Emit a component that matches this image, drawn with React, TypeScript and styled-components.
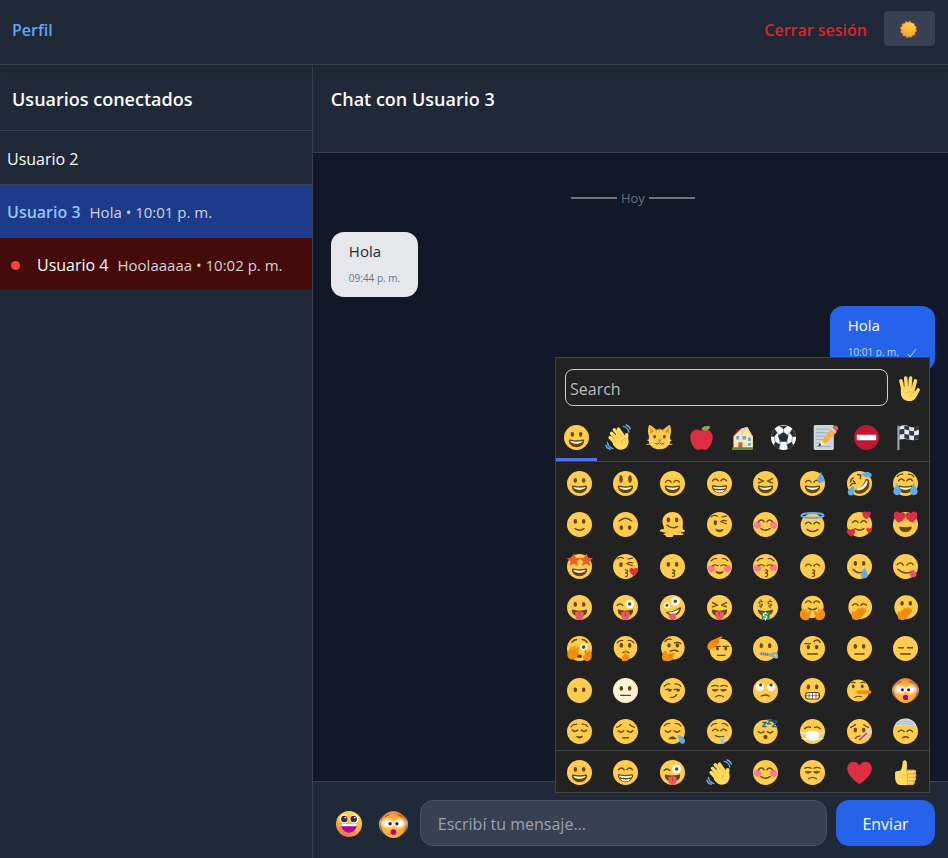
import React, { useId, useState } from "react";
import styled, { createGlobalStyle } from "styled-components";

const GlobalStyle = createGlobalStyle`
  *, *::before, *::after { box-sizing: border-box; }
  body {
    margin: 0;
    background: #111827;
    color: #f9fafb;
    font-family: "Segoe UI", "Open Sans", "Noto Sans", sans-serif;
    font-size: 16px;
    line-height: 24px;
  }
  button, input { font: inherit; }
  h1, h2, p, ul { margin: 0; padding: 0; }
`;

/* ---------- emoji drawings, all on a 36 x 36 grid ---------- */

const BROWN = "#664500";
const YELLOW = "#FFCC4D";
const RED = "#DD2E44";
const BLUE = "#5DADEC";
const ORANGE = "#F4900C";
const SKIN = "#FFDC5D";
const SKIN_LINE = "#EF9645";

const Head = ({ fill = YELLOW }: { fill?: string }) => <circle cx="18" cy="18" r="18" fill={fill} />;

const Stroke = ({ d, w = 2, c = BROWN }: { d: string; w?: number; c?: string }) => (
  <path d={d} fill="none" stroke={c} strokeWidth={w} strokeLinecap="round" strokeLinejoin="round" />
);

const Eyes = ({ y = 13.5, rx = 2.5, ry = 3.5, l = 12, r = 24 }) => (
  <g fill={BROWN}>
    <ellipse cx={l} cy={y} rx={rx} ry={ry} />
    <ellipse cx={r} cy={y} rx={rx} ry={ry} />
  </g>
);

const HappyEyes = ({ y = 14 }) => <Stroke d={`M8 ${y + 2}q4 -5 8 0M20 ${y + 2}q4 -5 8 0`} />;
const ClosedEyes = ({ y = 15 }) => <Stroke d={`M7.5 ${y}q4 4 8 0M20.5 ${y}q4 4 8 0`} />;
const SquintEyes = () => <Stroke d="M8 11l7 3.5-7 2.5M28 11l-7 3.5 7 2.5" />;
const Brows = ({ y = 8 }) => <Stroke w={1.8} d={`M6 ${y + 2}q3-4 8-3.5M30 ${y + 2}q-3-4-8-3.5`} />;

const BigMouth = () => (
  <>
    <path
      fill={BROWN}
      d="M18 22c-3.623 0-6.027-.422-9-1-.679-.131-2 0-2 2 0 4 4.595 9 11 9 6.404 0 11-5 11-9 0-2-1.321-2.132-2-2-2.973.578-5.377 1-9 1z"
    />
    <path fill="#fff" d="M9 23s3 1 9 1 9-1 9-1-2 4-9 4-9-4-9-4z" />
  </>
);
const Smile = () => <Stroke d="M11.5 24q6.5 4.5 13 0" />;
const OpenSmile = () => <path fill={BROWN} d="M12 24q6 3 12 0-1 5-6 5t-6-5z" />;
const KissMouth = ({ x = 18 }) => (
  <Stroke w={1.8} d={`M${x} 23q4 .5 3 2.5q-.5 1.5-3 1.8q4 .5 3 3q-.5 2-3 2.2`} />
);
const Cheeks = ({ y = 19 }) => (
  <g fill="#FF7892">
    <circle cx="6.5" cy={y} r="5" />
    <circle cx="29.5" cy={y} r="5" />
  </g>
);
const Drop = ({ x, y, s = 1 }: { x: number; y: number; s?: number }) => (
  <path fill={BLUE} transform={`translate(${x} ${y}) scale(${s})`} d="M0-8C1-4 5-1 5 3a5 5 0 0 1-10 0C-5-1-1-4 0-8z" />
);
const Heart = ({ x, y, s, a = 0 }: { x: number; y: number; s: number; a?: number }) => (
  <path
    fill={RED}
    transform={`translate(${x} ${y}) rotate(${a}) scale(${s})`}
    d="M0 16C-8 11-18 2-18-7c0-11 14-13 18-4 4-9 18-7 18 4C18 2 8 11 0 16z"
  />
);
const TongueMouth = () => (
  <>
    <path fill={BROWN} d="M8 21c6 2 14 2 20 0 1 0 1 1 1 2 0 4-4 8-11 8S7 27 7 23c0-1 0-2 1-2z" />
    <path fill="#E8596E" d="M12 25q6-3 12 0v5a6 6 0 0 1-12 0z" />
    <Stroke c={RED} w={1.2} d="M18 25v5" />
  </>
);
const WideEye = ({ x, y, r, p = 2 }: { x: number; y: number; r: number; p?: number }) => (
  <>
    <circle cx={x} cy={y} r={r} fill="#F5F8FA" />
    <circle cx={x} cy={y} r={p} fill={BROWN} />
  </>
);
const CoverHand = () => (
  <>
    <path
      fill={ORANGE}
      d="M8 35c-2-5-2-9 0-12l2 2 6-6c2-1 3 0 2 2l3-3c2-1 3 1 2 2l2-1c2 0 2 2 1 3 2 0 2 2 1 3l-7 8c-3 3-7 4-12 2z"
    />
    <Stroke c="#D67503" w={0.8} d="M13 27l6-6M15 29l7-7M17 31l7-7" />
  </>
);
const HugHand = ({ flip = false }: { flip?: boolean }) => (
  <g transform={flip ? "translate(36 0) scale(-1 1)" : undefined}>
    <path
      fill={ORANGE}
      d="M1 23c1-2 2-1 3 1l1 2-2-5c0-2 2-2 3 0l2 4-1-4c0-2 2-2 3 0l1 5 2-3c2-2 4-1 3 1l-2 8c-1 4-4 5-8 4-5-1-8-7-5-13z"
    />
    <Stroke c="#D67503" w={0.8} d="M3 27l3 3M6 26l2 3" />
  </g>
);
const WaveHand = () => (
  <>
    <g fill="none" stroke={SKIN} strokeLinecap="round">
      <path strokeWidth="5" d="M8 12l11 12M12 7l12 13M18 6l9 13M6 18l9 10" />
      <path strokeWidth="5" d="M30 14q-1 6-1 10" />
    </g>
    <path fill={SKIN} d="M9 17l13-8 5 9 5 1c2 7-1 14-7 16-5 2-11-1-15-7z" />
    <Stroke c={SKIN_LINE} w={0.9} d="M10.5 11l8 9M15 8l8 9M7.5 16l7 8M22 27q0-7 6-9" />
    <Stroke c={BLUE} w={2} d="M25 2q6 1 8 8M29 0q5 2 6 6M2 25q1 7 8 9M0 29q1 5 6 6" />
  </>
);
const Star = ({ x, y }: { x: number; y: number }) => (
  <path
    fill="#E95F28"
    transform={`translate(${x} ${y})`}
    d="M1-10l2.500 6.500 7 .5-5.500 4.500 2 7L.5 4.500l-6 4 1.700-7L-9.500-3l7-.5z"
  />
);
const Dollar = ({ x, y, c = BROWN }: { x: number; y: number; c?: string }) => (
  <g transform={`translate(${x} ${y})`}>
    <Stroke c={c} w={1.5} d="M2.5-2.500q-2.500-1.500-4.500-.5t0 3q4 0 4 2t-4.500 1.200M0-5.500v1.500M0 4.500v1.500" />
  </g>
);

const GloomBrows = () => <Stroke w={1.8} d="M5 12q4-1 7-4M31 12q-4-1-7-4" />;
const Frown = () => <Stroke d="M12.500 27q5.500-4 11 0" />;

const AstonishedFace = () => {
  const id = useId();
  return (
    <>
      <defs>
        <radialGradient id={`${id}face`} cx="45%" cy="60%" r="60%">
          <stop offset="0" stopColor="#FFC04A" />
          <stop offset="0.7" stopColor="#FFA930" />
          <stop offset="1" stopColor="#E37F45" />
        </radialGradient>
        <linearGradient id={`${id}haze`} x1="0" y1="0" x2="0" y2="1">
          <stop offset="0" stopColor="#5E3530" />
          <stop offset="0.4" stopColor="#FFE3B8" />
          <stop offset="1" stopColor="#7C3A48" />
        </linearGradient>
        <radialGradient id={`${id}glow`}>
          <stop offset="0.3" stopColor="#fff" />
          <stop offset="1" stopColor="#fff" stopOpacity="0" />
        </radialGradient>
      </defs>
      <ellipse cx="18" cy="18" rx="19.500" ry="17" fill={`url(#${id}haze)`} opacity="0.7" />
      <ellipse cx="18" cy="18" rx="16.500" ry="18" fill={`url(#${id}face)`} />
      <ellipse cx="10" cy="16.500" rx="10" ry="8" fill={`url(#${id}glow)`} />
      <ellipse cx="26" cy="16.500" rx="10" ry="8" fill={`url(#${id}glow)`} />
      <circle cx="13.500" cy="17" r="4" fill="#fff" />
      <circle cx="22.500" cy="17" r="4" fill="#fff" />
      <circle cx="13.500" cy="17" r="2.300" fill="#3B2340" />
      <circle cx="22.500" cy="17" r="2.300" fill="#3B2340" />
      <Stroke c="#8A4B20" w={1.2} d="M7 7.500q2-2 5-2.500M29 7.500q-2-2-5-2.500" />
      <circle cx="18" cy="28" r="3.800" fill="#B3008F" />
    </>
  );
};

const GlossyGrin = () => {
  const id = useId();
  return (
    <>
      <defs>
        <linearGradient id={id} x1="0.7" y1="0" x2="0.2" y2="1">
          <stop offset="0" stopColor="#FFE04A" />
          <stop offset="0.55" stopColor="#FFB235" />
          <stop offset="1" stopColor="#E3606B" />
        </linearGradient>
      </defs>
      <Head fill={`url(#${id})`} />
      <circle cx="11" cy="11" r="6" fill="#fff" />
      <circle cx="25" cy="11" r="6" fill="#fff" />
      <circle cx="11.500" cy="11" r="4.500" fill="#43273F" />
      <circle cx="24.500" cy="11" r="4.500" fill="#43273F" />
      <circle cx="13" cy="9" r="1.200" fill="#fff" />
      <circle cx="26" cy="9" r="1.200" fill="#fff" />
      <path fill="#B4009E" d="M7 18h22c0 7-5 12-11 12S7 25 7 18z" />
      <path fill="#fff" d="M7 18h22v1c0 1-1 2-2 2H9c-1 0-2-1-2-2z" />
    </>
  );
};

const SunDisc = () => {
  const id = useId();
  return (
    <>
      <defs>
        <linearGradient id={id} x1="0.7" y1="0" x2="0.2" y2="1">
          <stop offset="0" stopColor="#FFD83A" />
          <stop offset="1" stopColor="#E8A03C" />
        </linearGradient>
      </defs>
      <circle cx="18" cy="18" r="16" fill="none" stroke="#EF7F32" strokeWidth="3.500" strokeDasharray="5.380 3" />
      <circle cx="18" cy="18" r="15.500" fill={`url(#${id})`} />
    </>
  );
};

const drawings: Record<string, React.ReactNode> = {
  grinning: <><Head /><Eyes /><BigMouth /></>,
  smiley: <><Head /><Eyes y={11.5} ry={5.5} l={11.5} r={24.5} /><BigMouth /></>,
  smile: <><Head /><HappyEyes /><BigMouth /></>,
  grin: (
    <>
      <Head /><HappyEyes y={12} />
      <path fill={BROWN} d="M7 22q0-2 2-1.500 9 2 18 0 2-.5 2 1.500c0 5-5 10-11 10S7 27 7 22z" />
      <path fill="#fff" d="M9 22.500q9 2 18 0v2.500q-9 2-18 0zM10 27q8 2 16 0-3 4-8 4t-8-4z" />
    </>
  ),
  laughing: <><Head /><SquintEyes /><BigMouth /></>,
  sweatSmile: <><Head /><HappyEyes /><BigMouth /><Drop x={30} y={9} /></>,
  rofl: (
    <>
      <Head />
      <Stroke w={2} d="M5 21q1-4 7-3l-3-4M15 5l5 1-1 5M5 16q1-5 4-6" />
      <path fill={BROWN} d="M12 31c-2-2-1-4 2-5 6-2 10-6 12-12 1-3 3-4 5-1 3 6 1 12-4 16s-11 5-15 2z" />
      <path fill="#fff" d="M14 28c-1-1 0-2 2-3 5-2 9-5 11-10 1-2 2-1 2.500 0 0 7-6 13-15.500 13z" />
      <path fill={BLUE} d="M21 5c4-4 10-5 14-1 2 3-1 6-4 5-3 0-6-1-10-4zM9 21c2 4 3 9 0 13-3 3-8 1-8-3 0-4 4-6 8-10z" />
    </>
  ),
  joy: (
    <>
      <Head /><Brows y={6} /><HappyEyes y={12} /><BigMouth />
      <Drop x={6} y={26} s={1.1} /><Drop x={30} y={26} s={1.1} />
    </>
  ),
  slightSmile: <><Head /><Eyes /><Smile /></>,
  upsideDown: <g transform="rotate(180 18 18)"><Head /><Eyes /><Stroke d="M9 23q9 8 18 0" /></g>,
  melting: (
    <>
      <path
        fill={YELLOW}
        d="M18 0c9 0 15 7 15 15 0 4-1 6 0 9 1 3 3 1 3 3s-3 2-5 2 0 2 2 2 1 2-1 2H20c-2 0 0 3-3 3h-6c-3 0-2-3-5-3-2 0-1-2 1-2s1-2-2-2-5 0-5-2 2-2 4-2 2-3 1-5C0 9 8 0 18 0z"
      />
      <Eyes y={11.5} /><Stroke d="M10 19q8 6 15 2" />
      <Stroke w={1} c="#D79B22" d="M7 29h5M25 29h4" />
    </>
  ),
  wink: (
    <>
      <Head /><ellipse cx="12" cy="15.500" rx="2.500" ry="3.500" fill={BROWN} />
      <Stroke d="M20 14l8 3M20 14q4-3 8-1M6 7q4-4 9-1M22 7l6-1" w={1.7} />
      <OpenSmile />
    </>
  ),
  blush: <><Head /><Cheeks /><HappyEyes y={12} /><Smile /></>,
  halo: (
    <>
      <circle cx="18" cy="19" r="17" fill={YELLOW} /><HappyEyes y={15} /><Stroke d="M10 25q8 6 16 0" />
      <ellipse cx="18" cy="5" rx="16" ry="3.500" fill="none" stroke={BLUE} strokeWidth="3" />
    </>
  ),
  hearts: <><Head /><HappyEyes y={13} /><Smile /><Heart x={28} y={5} s={0.34} /><Heart x={6} y={30} s={0.34} a={-5} /><Heart x={32} y={27} s={0.23} /></>,
  heartEyes: (
    <>
      <Head /><Heart x={9} y={8} s={0.48} a={10} /><Heart x={27} y={8} s={0.48} a={-10} />
      <path fill={BROWN} d="M10 21q8 2 16 0c2 0 1 8-8 8s-10-8-8-8z" />
    </>
  ),
  starStruck: <><Head /><Star x={9} y={9} /><Star x={27} y={9} /><BigMouth /></>,
  kissHeart: (
    <>
      <Head /><ellipse cx="11.500" cy="15.500" rx="2.500" ry="3.500" fill={BROWN} />
      <Stroke d="M20 14l8 3M20 14q4-3 8-1M6 7q4-4 9-1M22 7l6-1" w={1.7} />
      <KissMouth /><Heart x={30} y={26} s={0.36} />
    </>
  ),
  kiss: <><Head /><Eyes y={15} /><KissMouth /></>,
  relaxed: <><Head /><Cheeks y={21} /><Stroke d="M8 17q4-3 8 0M20 17q4-3 8 0" w={1.7} /><Brows y={8} /><OpenSmile /></>,
  kissClosed: <><Head /><Cheeks y={20} /><Stroke d="M8 17q4-3 8 0M20 17q4-3 8 0" w={1.7} /><Brows y={8} /><KissMouth /></>,
  kissSmile: <><Head /><HappyEyes y={15} /><KissMouth /></>,
  tear: <><Head /><Eyes /><Stroke d="M9 22q5 7 13 4" /><Drop x={25} y={27} /></>,
  yum: (
    <>
      <Head /><Stroke d="M6 15q5-5 9 1M20 16q4-6 9-1M7 22q10 9 20 3" />
      <path fill="#E8596E" transform="rotate(-35 27 27)" d="M23 25h9v5a4.500 4.500 0 0 1-9 0z" />
      <Stroke c={RED} w={1} d="M26 26l3 4" />
    </>
  ),
  tongue: <><Head /><Eyes y={13.5} /><TongueMouth /></>,
  winkTongue: <><Head /><Stroke d="M6 15q4-4 8 0" /><WideEye x={24} y={13} r={6.5} p={2.4} /><TongueMouth /></>,
  zany: (
    <>
      <Head /><WideEye x={10} y={15} r={4.5} /><WideEye x={22} y={9} r={6.5} p={2.4} />
      <path fill={BROWN} d="M9 24q10 1 19-6c2-1 3 1 2 3-2 6-6 9-11 9-6 0-12-5-10-6z" />
      <path fill="#fff" d="M12 25q9 0 16-5-3 7-9 8-5 0-7-3z" />
      <path fill="#E8596E" transform="rotate(-12 18 30)" d="M13 27h10v4a5 5 0 0 1-10 0z" />
    </>
  ),
  squintTongue: <><Head /><SquintEyes /><TongueMouth /></>,
  money: (
    <>
      <Head /><Dollar x={11.5} y={12.5} /><Dollar x={24.5} y={12.5} />
      <path fill={BROWN} d="M7 21q11 4 22 0c0 5-4 9-11 9S7 26 7 21z" />
      <path fill="#3E8A4E" d="M12 24q6 2 12 0v12H13z" />
      <Dollar x={18} y={30} c="#fff" />
    </>
  ),
  hug: <><circle cx="18" cy="17" r="16" fill={YELLOW} /><HappyEyes y={9} /><Stroke d="M12 19q6 4 12 0" /><HugHand /><HugHand flip /></>,
  giggle: <><circle cx="19" cy="17.500" r="17" fill={YELLOW} /><HappyEyes y={13} /><CoverHand /></>,
  gasp: <><circle cx="19" cy="17.500" r="17" fill={YELLOW} /><Eyes y={12} l={13} r={25} /><CoverHand /></>,
  peek: (
    <>
      <Head /><Stroke d="M7 9q3-4 7-4M22 5q4 0 7 4" />
      <WideEye x={24} y={16} r={5} p={2.6} />
      <ellipse cx="18" cy="29" rx="4" ry="2.500" fill={BROWN} />
      <path fill={ORANGE} d="M1 24l5-10 2 6 3-8 2 7 3-5 1 3-1 10c-2 5-5 7-9 7-5-1-8-6-6-10zM35 24l-3-5-2 5-3-5-2 2 1 6-3 2c0 4 3 7 6 7 5 0 8-6 6-12z" />
      <Stroke c="#D67503" w={0.9} d="M6 22l3 5M10 20l2 6M30 24l-1 4" />
    </>
  ),
  shush: (
    <>
      <circle cx="18" cy="17" r="17" fill={YELLOW} /><Brows /><Eyes y={13.5} />
      <Stroke w={1.8} d="M14 24q4-3 9 0" />
      <path fill={ORANGE} d="M17 19c2-1 2 0 2 2v6c3-1 4 1 4 4s-2 5-5 5h-5v-6c1-2 3-2 3-4z" />
      <Stroke c="#D67503" w={1} d="M18 29h4M18 32h4" />
    </>
  ),
  think: (
    <>
      <circle cx="18.500" cy="17" r="17" fill={YELLOW} /><Eyes y={13.5} ry={3} l={13} r={25} />
      <Stroke d="M7 8q4-5 9-3M21 10q5-2 9 1M15 22q5-3 11 0" />
      <path fill={ORANGE} d="M6 22c3-1 4 1 4 4l9-2c3 0 3 2 1 3l-3 1c4 0 3 7-3 8H8c-6 0-7-7-2-14z" />
      <Stroke c="#D67503" w={1} d="M13 28h5M13 31h4" />
    </>
  ),
  salute: (
    <>
      <circle cx="20" cy="20" r="16" fill={YELLOW} /><Eyes y={18} rx={2} ry={2.8} l={15} r={27} />
      <Stroke d="M12 15h7M23 15h8M15 28h11" w={1.7} />
      <path fill={ORANGE} d="M1 18c-1-4 0-8 5-11L19 1c3-1 4 0 2 2l-5 4c3 0 3 1 1 3L9 18l-6 3z" />
      <Stroke c="#D67503" w={1} d="M8 10l9-4M9 13l8-5" />
    </>
  ),
  zipper: (
    <>
      <Head /><Eyes y={14} /><Stroke w={4} c="#99AAB5" d="M11 25.500l16 2" />
      <Stroke w={1.2} c="#66757F" d="M12 24v3M15 24v3M18 25v3M21 25v3" />
      <path fill="#99AAB5" d="M24 25l8-2c3 0 5 4 4 8-1 2-3 2-5 1l-6-3z" /><circle cx="32" cy="28" r="1.500" fill={YELLOW} />
    </>
  ),
  eyebrow: <><Head /><Eyes y={16} ry={3.2} /><Stroke d="M7 11h8M20 8q5-5 9 1M11 26h14" /></>,
  neutral: <><Head /><Eyes y={15} /><Stroke d="M11.500 26h13" /></>,
  expressionless: <><Head /><Stroke d="M8 17h7M21 17h7M11 26h14" /></>,
  noMouth: <><Head /><Eyes y={17} /></>,
  dotted: (
    <>
      <Head fill="#FFF3D9" /><circle cx="18" cy="18" r="17" fill="none" stroke={YELLOW} strokeWidth="1.500" strokeDasharray="3 6" />
      <Eyes y={15} /><Stroke d="M11 25h14" />
    </>
  ),
  smirk: <><Head /><Brows y={10} /><Stroke d="M8 17q4-2 8 0M20 17q4-2 8 0M15 28q6 1 9-4" w={1.8} /><Stroke w={3} d="M13 18h2M25 18h2" /></>,
  unamused: (
    <>
      <Head /><Stroke w={1.8} d="M7 12q5-3 9 0M20 12q4-3 9 0M8 17h8M20 17h8" />
      <Stroke w={2.6} d="M10 18h3M22 18h3" /><Frown />
    </>
  ),
  eyeRoll: <><Head /><WideEye x={10} y={13} r={6} p={0} /><WideEye x={26} y={13} r={6} p={0} /><circle cx="11" cy="10" r="2.300" fill={BROWN} /><circle cx="26" cy="10" r="2.300" fill={BROWN} /><Stroke d="M12 26q6-3 11 0" /></>,
  grimace: (
    <>
      <Head /><Eyes y={13} /><rect x="7" y="20" width="22" height="11" rx="5" fill={BROWN} />
      <rect x="9" y="21.500" width="18" height="8" rx="3" fill="#fff" />
      <Stroke w={1} d="M9 25.500h18M13 22v7M18 22v7M23 22v7" />
    </>
  ),
  lying: (
    <>
      <circle cx="16" cy="18" r="16" fill={YELLOW} /><Eyes y={12} ry={2.8} rx={2} l={9} r={22} />
      <Stroke d="M6 7q3-2 6 0M20 7q3-2 6 0M11 28q5-3 10-1" w={1.6} />
      <rect x="14" y="17.500" width="21" height="5.500" rx="2.700" fill={ORANGE} />
    </>
  ),
  astonished: <AstonishedFace />,
  relieved: <><Head /><Brows y={9} /><ClosedEyes y={16} /><path fill={BROWN} d="M13 24q5 2 10 0-1 4-5 4t-5-4z" /></>,
  pensive: <><Head /><GloomBrows /><ClosedEyes y={17} /><Stroke d="M14 27h8" /></>,
  sleepy: <><Head /><Brows y={8} /><ClosedEyes y={17} /><path fill={BROWN} d="M12 29q6-8 12 0z" /><path fill={BLUE} d="M24 23c7 0 12 4 12 9 0 4-5 5-7 2-2-2-1-7-5-11z" /></>,
  drool: <><Head /><Brows y={8} /><HappyEyes y={15} /><Stroke d="M12 24q6 3 12 1" /><path fill="#8CCAF7" d="M19 26h6v8c0 3-5 2-5 0z" /></>,
  sleeping: <><circle cx="18" cy="18.500" r="17.500" fill={YELLOW} /><ClosedEyes y={18} /><circle cx="18" cy="26" r="3" fill={BROWN} /><Stroke c="#226699" w={2} d="M14 5h5l-5 6h5M21 1h5l-5 6h5M28 3h7l-7 8h7" /></>,
  mask: (
    <>
      <Head /><Stroke d="M7 14q3-4 8-2M29 14q-3-4-8-2" />
      <Stroke w={2} c="#E6E7E8" d="M1 19l9 3M35 19l-9 3M3 28l8 1M33 28l-8 1" />
      <path fill="#fff" d="M9 19q9-4 18 0v10q-9 5-18 0z" />
    </>
  ),
  thermometer: <><Head /><GloomBrows /><Eyes y={16} /><Stroke w={1.8} d="M12 28q3-4 8-3" /><Stroke w={5} c="#CCD6DD" d="M20 28L33 17" /><Stroke w={2} c={RED} d="M18 30L28 21" /></>,
  bandage: (
    <>
      <Head /><Stroke d="M8 18q4-4 8 0M20 18q4-4 8 0M14 27q4-3 8 0" />
      <path fill="#CCD6DD" d="M3 8C8-3 27-4 33 8l1 4Q18 7 2 11z" />
      <Stroke c="#99AAB5" w={0.8} d="M4 8q14-4 28 2M8 4q12-2 20 2" />
    </>
  ),
  wave: <WaveHand />,
  heart: <Heart x={18} y={19} s={0.98} />,
  thumbsUp: (
    <>
      <path fill={SKIN} d="M3 18c0-2 3-2 8-3 3-4 2-8 3-12 1-4 6-3 6 1v10h10c4 0 4 4 2 5 2 1 2 5 0 6 2 1 1 5-1 5 1 3 0 6-3 6H10c-4 0-7-5-7-11z" />
      <Stroke c={SKIN_LINE} w={1.3} d="M20 15h10q4 2 1 5h-9M31 20q4 3 0 5h-9M31 25q3 3-1 5h-8M30 30q2 3-2 5h-7M20 15q-2 2 1 5-2 2 0 5-2 3 0 5-1 3 0 5" />
    </>
  ),
  hand: (
    <>
      <g fill="none" stroke={SKIN} strokeLinecap="round">
        <path strokeWidth="5" d="M10 19L7 7M15 17L14 3M20 17l1-14M25 18l3-11" />
        <path strokeWidth="5" d="M26 27q4-2 6-7" />
      </g>
      <path fill={SKIN} d="M7 16l20-1 0 7 5 1c-2 9-6 13-12 13-9 0-13-5-13-12z" />
      <Stroke c={SKIN_LINE} w={0.8} d="M11 9l1 8M17.500 6v10M24.500 9l-2 8M14 24q8-3 12 0-4 0-6 6" />
    </>
  ),
  cat: (
    <>
      <path fill={YELLOW} d="M3 0q3 0 10 7 5-2 10 0Q31 0 33 0q3 8 0 17 2 5 0 9c-3 7-9 9-15 9S6 33 3 26q-2-4 0-9Q0 8 3 0z" />
      <path fill={ORANGE} d="M4 2l6 7-5 4zM32 2l-6 7 5 4zM17 5h2l-1 8zM13 6l2 5-4-4zM23 6l-2 5 4-4z" />
      <Eyes y={17} ry={2.6} rx={2} l={11} r={25} />
      <path fill="#E75A70" d="M15 21h6l-3 3z" /><Stroke w={1.2} d="M12 27q4 2 6-2 2 4 6 2" />
      <Stroke c="#F7E7A8" w={1.2} d="M1 22l9 2M0 28l10-1M35 22l-9 2M36 28l-10-1" />
    </>
  ),
  apple: (
    <>
      <path fill={RED} d="M18 9c5-4 15-3 16 7 1 8-5 20-11 20-2 0-3-1-5-1s-3 1-5 1C7 36 1 24 2 16 3 6 13 5 18 9z" />
      <Stroke c="#8A4633" w={1.5} d="M18 10q0-5 5-8" /><path fill="#77B255" d="M18 6c2-5 8-5 13-4-2 5-8 8-13 4z" />
    </>
  ),
  house: (
    <>
      <path fill="#A0041E" d="M8 6h4v9H8z" /><path fill="#66757F" d="M5 15L15 5h3L6 19z" />
      <path fill="#FFE8B6" d="M5 17L17 5l8-2 8 14v17H5z" />
      <path fill="#F3D2A2" d="M17 5l8-2 8 14-2 1-7-12-9 12z" />
      <path fill="#55ACEE" d="M9 16h4v5H9zM18 16h5v5h-5zM26 18h4v5h-4zM26 26h4v4h-4z" />
      <path fill="#C1694F" d="M12 25h6v9h-6z" /><path fill="#5C913B" d="M3 32h30v4H3z" />
    </>
  ),
  soccer: (
    <>
      <Head fill="#F5F8FA" />
      <path
        fill="#292F33"
        d="M18 10l7 5-2 9H13l-3-9zM12 1h12l-6 5zM1 12L5 5l4 6-4 6H0zM31 5l4 7 1 5h-5l-4-6zM4 29l2-5 7 4-1 7q-5-2-8-6zM32 29l-2-5-7 4 1 7q5-2 8-6z"
      />
      <Stroke c="#66757F" w={0.9} d="M18 6v5M9 11l3 4M27 11l-3 4M6 24l-1-7M13 28v-4M23 28v-4M30 24l1-7" />
    </>
  ),
  memo: (
    <>
      <rect x="1" y="0" width="29" height="36" rx="2" fill="#CCD6DD" />
      <Stroke c="#99AAB5" w={1.3} d="M5 6h18M5 11h16M5 16h12M5 21h8M5 26h7M5 31h20" />
      <path fill="#FFAC33" d="M12 23L28 4l6 6-16 17z" /><path fill="#EA596E" d="M28 4l3-3q2-1 4 1t1 4l-3 4z" />
      <path fill="#CCD6DD" d="M26 6l2-2 6 6-2 2z" /><path fill="#FFE8B6" d="M12 22l6 6-9 2z" /><path fill="#292F33" d="M10 26l2 3-5 2z" />
    </>
  ),
  noEntry: <><Head fill="#BE1931" /><rect x="4" y="14" width="28" height="8" rx="1" fill="#fff" /></>,
  flag: (
    <>
      <path fill="#99AAB5" d="M2 1h3v35H2z" />
      <path fill="#E1E8ED" d="M5 2q7-3 14 0t14-1v19q-7 3-14 1t-14 0z" />
      <path fill="#31373D" d="M5 7q4-2 7-1V1l7 1v6q4 1 7 1V3l7-2v6l-7 2v6l7-1v6l-7 2v-7q-4 1-7-1V8l-7-2v7l7 1v7l-7-2v-6q-4 0-7 1z" />
    </>
  ),
  glossyGrin: <GlossyGrin />,
  sun: <SunDisc />,
};

const Glyph = styled.svg<{ $size: number }>`
  display: block;
  flex: none;
  width: ${(p) => p.$size}px;
  height: ${(p) => p.$size}px;
  overflow: visible;
`;

const Emoji = ({ name, size = 25 }: { name: string; size?: number }) => (
  <Glyph $size={size} viewBox="0 0 36 36" aria-hidden="true">
    {drawings[name]}
  </Glyph>
);

/* ---------- page frame ---------- */

const Page = styled.div`
  display: flex;
  flex-direction: column;
  height: 100vh;
  min-height: 600px;
`;

const TopBar = styled.header`
  display: flex;
  align-items: center;
  justify-content: space-between;
  padding: 11px 13px 18px 12px;
  background: #1f2937;
  border-bottom: 1px solid #374151;
  box-shadow: 0 4px 12px rgba(0, 0, 0, 0.12);
  z-index: 1;
`;

const ProfileLink = styled.a`
  padding-top: 2px;
  color: #60a5fa;
  font-weight: 600;
  text-decoration: none;
`;

const TopActions = styled.div`
  display: flex;
  align-items: center;
  gap: 17px;
`;

const LogoutButton = styled.button`
  padding: 2px 0 0;
  border: 0;
  background: none;
  color: #dc2626;
  font-weight: 600;
  cursor: pointer;
`;

const ThemeButton = styled.button`
  display: grid;
  place-items: center;
  width: 51px;
  height: 35px;
  padding: 2px 2px 0 0;
  border: 0;
  border-radius: 4px;
  background: #374151;
  cursor: pointer;
`;

const Body = styled.div`
  display: grid;
  grid-template-columns: 33% 1fr;
  flex: 1;
  min-height: 0;
`;

const Sidebar = styled.aside`
  background: #1f2937;
  border-right: 1px solid #374151;
`;

const SidebarTitle = styled.h2`
  padding: 22px 12px 19px;
  border-bottom: 1px solid #374151;
  font-size: 18px;
  line-height: 24px;
  font-weight: 600;
`;

const UserList = styled.ul`
  padding-top: 1px;
  list-style: none;
`;

type RowTone = "plain" | "active" | "unread";
const rowColors: Record<RowTone, string> = { plain: "transparent", active: "#1e3a8a", unread: "#450a0a" };

const UserItem = styled.li<{ $tone: RowTone }>`
  background: ${(p) => rowColors[p.$tone]};

  &:not(:last-child) { border-bottom: 1px solid #374151; }
`;

const UserButton = styled.button`
  display: flex;
  align-items: center;
  gap: 9px;
  width: 100%;
  height: 52px;
  padding: 2px 7px 0;
  border: 0;
  background: none;
  color: inherit;
  text-align: left;
  cursor: pointer;
`;

const UserName = styled.span<{ $active?: boolean }>`
  color: ${(p) => (p.$active ? "#93c5fd" : "#f9fafb")};
  font-weight: ${(p) => (p.$active ? 600 : 400)};
`;

const UserPreview = styled.span`
  color: #d1d5db;
  font-size: 15px;
`;

const UnreadDot = styled.span`
  flex: none;
  width: 9px;
  height: 9px;
  margin: 0 8px 0 4px;
  border-radius: 50%;
  background: #ef4444;
`;

/* ---------- conversation ---------- */

const Chat = styled.main`
  display: flex;
  flex-direction: column;
  min-width: 0;
  min-height: 0;
  background: #111827;
`;

const ChatHeader = styled.header`
  padding: 22px 18px 41px;
  background: #1f2937;
  border-bottom: 1px solid #374151;
`;

const ChatTitle = styled.h1`
  font-size: 18px;
  line-height: 24px;
  font-weight: 600;
`;

const Messages = styled.section`
  display: flex;
  flex: 1;
  flex-direction: column;
  gap: 9px;
  min-height: 0;
  padding: 36px 13px 18px 18px;
`;

const DayDivider = styled.div`
  display: flex;
  align-items: center;
  justify-content: center;
  gap: 4px;
  margin-bottom: 16px;
  color: #6b7280;
  font-size: 13px;
  line-height: 18px;

  &::before, &::after {
    content: "";
    width: 46px;
    height: 2px;
    background: #6b7280;
  }
`;

const Bubble = styled.article<{ $own?: boolean }>`
  align-self: ${(p) => (p.$own ? "flex-end" : "flex-start")};
  padding: 7px 18px 11px;
  border-radius: 13px;
  background: ${(p) => (p.$own ? "#2563eb" : "#e5e7eb")};
  color: ${(p) => (p.$own ? "#fff" : "#1f2937")};
  font-size: 15px;
`;

const BubbleMeta = styled.div<{ $own?: boolean }>`
  display: flex;
  align-items: center;
  gap: 8px;
  margin-top: 7px;
  color: ${(p) => (p.$own ? "#bfdbfe" : "#6b7280")};
  font-size: 10px;
  line-height: 16px;
`;

const Tick = styled.svg`
  width: 10px;
  height: 10px;
  margin-top: 2px;
`;

const Composer = styled.form`
  position: relative;
  display: flex;
  align-items: center;
  gap: 9px;
  padding: 18px 13px 12px 19px;
  background: #1f2937;
  border-top: 1px solid #374151;
`;

const IconButton = styled.button`
  display: grid;
  place-items: center;
  flex: none;
  width: 35px;
  height: 35px;
  padding: 2px 0 0;
  border: 0;
  background: none;
  cursor: pointer;
`;

const MessageInput = styled.input`
  flex: 1;
  min-width: 0;
  height: 46px;
  padding: 2px 17px 0;
  border: 1px solid #4b5563;
  border-radius: 13px;
  outline: none;
  background: #374151;
  color: #f9fafb;

  &::placeholder { color: #9ca3af; opacity: 1; }
`;

const SendButton = styled.button`
  flex: none;
  width: 99px;
  height: 46px;
  padding: 2px 0 0;
  border: 0;
  border-radius: 13px;
  background: #2563eb;
  color: #fff;
  cursor: pointer;
`;

/* ---------- emoji picker ---------- */

const Picker = styled.div`
  position: absolute;
  right: 18px;
  bottom: 65px;
  width: 375px;
  border: 1px solid #444;
  background: #222;
`;

const PickerSearch = styled.div`
  display: flex;
  align-items: center;
  gap: 8px;
  padding: 11px 8px 6px 9px;
`;

const SearchInput = styled.input`
  flex: 1;
  min-width: 0;
  height: 37px;
  padding: 2px 4px 0;
  border: 1px solid #ccc;
  border-radius: 8px;
  outline: none;
  background: #222;
  color: #efefef;

  &::placeholder { color: #bbb; opacity: 1; }
`;

const PickerButton = styled.button`
  display: grid;
  place-items: center;
  min-width: 0;
  padding: 1px 0 0;
  border: 0;
  background: none;
  cursor: pointer;
`;

const Tabs = styled.nav`
  display: grid;
  grid-template-columns: repeat(9, 1fr);
  border-bottom: 1px solid #444;
`;

const TabButton = styled(PickerButton)<{ $selected: boolean }>`
  height: 49px;
  padding-top: 4px;
  border-bottom: 3px solid ${(p) => (p.$selected ? "#5373ec" : "transparent")};
`;

const EmojiViewport = styled.div`
  height: 288px;
  overflow: hidden;
`;

const EmojiGrid = styled.div`
  display: grid;
  grid-template-columns: repeat(8, 1fr);
  grid-template-rows: repeat(7, 1fr);
  height: 290px;
`;

const FavoriteRow = styled.div`
  display: grid;
  grid-template-columns: repeat(8, 1fr);
  height: 42px;
  border-top: 1px solid #444;
`;

const tabNames = ["grinning", "wave", "cat", "apple", "house", "soccer", "memo", "noEntry", "flag"];

const gridNames = [
  "grinning", "smiley", "smile", "grin", "laughing", "sweatSmile", "rofl", "joy",
  "slightSmile", "upsideDown", "melting", "wink", "blush", "halo", "hearts", "heartEyes",
  "starStruck", "kissHeart", "kiss", "relaxed", "kissClosed", "kissSmile", "tear", "yum",
  "tongue", "winkTongue", "zany", "squintTongue", "money", "hug", "giggle", "gasp",
  "peek", "shush", "think", "salute", "zipper", "eyebrow", "neutral", "expressionless",
  "noMouth", "dotted", "smirk", "unamused", "eyeRoll", "grimace", "lying", "astonished",
  "relieved", "pensive", "sleepy", "drool", "sleeping", "mask", "thermometer", "bandage",
];

const favoriteNames = ["grinning", "grin", "winkTongue", "wave", "blush", "unamused", "heart", "thumbsUp"];

const EmojiPicker = () => {
  const [tab, setTab] = useState(0);
  return (
    <Picker>
      <PickerSearch>
        <SearchInput type="text" placeholder="Search" aria-label="Search" />
        <PickerButton type="button" aria-label="hand">
          <Emoji name="hand" />
        </PickerButton>
      </PickerSearch>
      <Tabs>
        {tabNames.map((name, i) => (
          <TabButton key={name} type="button" aria-label={name} $selected={i === tab} onClick={() => setTab(i)}>
            <Emoji name={name} />
          </TabButton>
        ))}
      </Tabs>
      <EmojiViewport>
        <EmojiGrid>
          {gridNames.map((name) => (
            <PickerButton key={name} type="button" aria-label={name}>
              <Emoji name={name} />
            </PickerButton>
          ))}
        </EmojiGrid>
      </EmojiViewport>
      <FavoriteRow>
        {favoriteNames.map((name) => (
          <PickerButton key={name} type="button" aria-label={name}>
            <Emoji name={name} />
          </PickerButton>
        ))}
      </FavoriteRow>
    </Picker>
  );
};

export default function App() {
  const [text, setText] = useState("");
  return (
    <>
      <GlobalStyle />
      <Page>
        <TopBar>
          <ProfileLink href="#perfil">Perfil</ProfileLink>
          <TopActions>
            <LogoutButton type="button">Cerrar sesión</LogoutButton>
            <ThemeButton type="button" aria-label="Tema claro">
              <Emoji name="sun" size={17} />
            </ThemeButton>
          </TopActions>
        </TopBar>
        <Body>
          <Sidebar>
            <SidebarTitle>Usuarios conectados</SidebarTitle>
            <UserList>
              <UserItem $tone="plain">
                <UserButton type="button">
                  <UserName>Usuario 2</UserName>
                </UserButton>
              </UserItem>
              <UserItem $tone="active">
                <UserButton type="button">
                  <UserName $active>Usuario 3</UserName>
                  <UserPreview>Hola • 10:01 p. m.</UserPreview>
                </UserButton>
              </UserItem>
              <UserItem $tone="unread">
                <UserButton type="button">
                  <UnreadDot />
                  <UserName>Usuario 4</UserName>
                  <UserPreview>Hoolaaaaa • 10:02 p. m.</UserPreview>
                </UserButton>
              </UserItem>
            </UserList>
          </Sidebar>
          <Chat>
            <ChatHeader>
              <ChatTitle>Chat con Usuario 3</ChatTitle>
            </ChatHeader>
            <Messages>
              <DayDivider>Hoy</DayDivider>
              <Bubble>
                <p>Hola</p>
                <BubbleMeta>09:44 p. m.</BubbleMeta>
              </Bubble>
              <Bubble $own>
                <p>Hola</p>
                <BubbleMeta $own>
                  10:01 p. m.
                  <Tick viewBox="0 0 10 10" aria-label="Enviado">
                    <path d="M1 6l2 3L9 1" fill="none" stroke="#bfdbfe" strokeWidth="1" />
                  </Tick>
                </BubbleMeta>
              </Bubble>
            </Messages>
            <Composer onSubmit={(e) => e.preventDefault()}>
              <IconButton type="button" aria-label="Emojis">
                <Emoji name="glossyGrin" size={26} />
              </IconButton>
              <IconButton type="button" aria-label="Reacciones">
                <Emoji name="astonished" size={27} />
              </IconButton>
              <MessageInput
                type="text"
                aria-label="Mensaje"
                placeholder="Escribí tu mensaje..."
                value={text}
                onChange={(e) => setText(e.target.value)}
              />
              <SendButton type="submit">Enviar</SendButton>
              <EmojiPicker />
            </Composer>
          </Chat>
        </Body>
      </Page>
    </>
  );
}
